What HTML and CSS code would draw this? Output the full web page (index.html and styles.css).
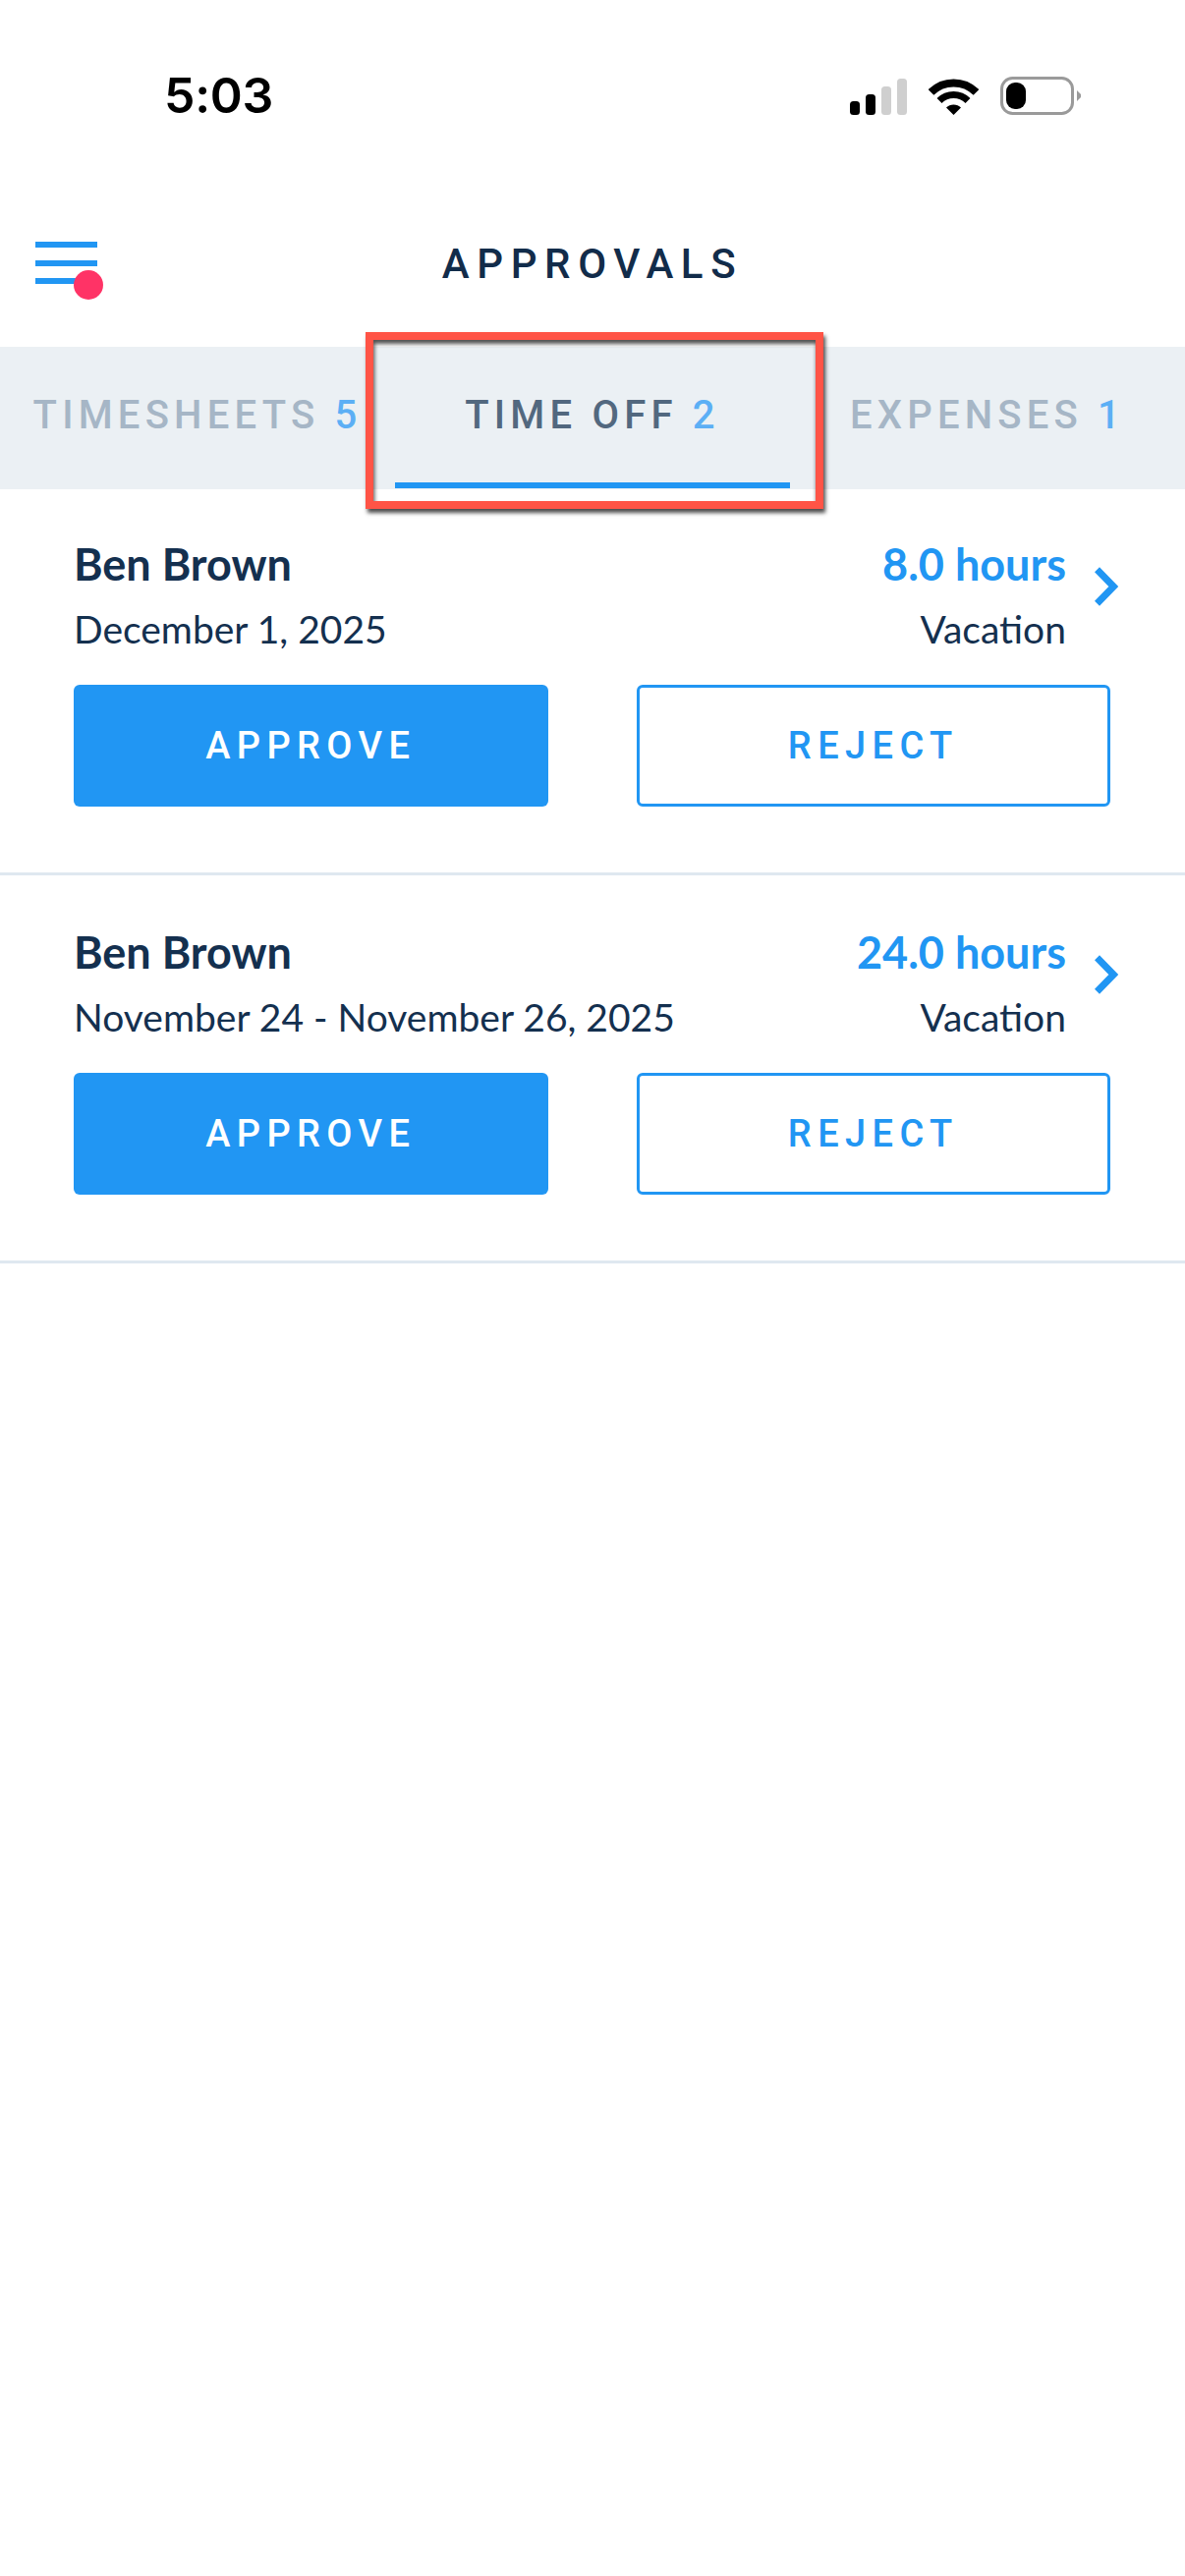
FILE: index.html
```html
<!DOCTYPE html>
<html lang="en">
<head>
    <meta charset="utf-8">
    <title>Approvals</title>
    <link rel="stylesheet" href="styles.css">
</head>
<body>
<div class="status-bar">
    <span class="time">5:03</span>
    <div class="status-icons">
        <svg width="58" height="37" viewBox="0 0 58 37">
            <rect x="0" y="23" width="10" height="14" rx="3.5" fill="#000"></rect>
            <rect x="16" y="16" width="10" height="21" rx="3.5" fill="#000"></rect>
            <rect x="32" y="8" width="10" height="29" rx="3.5" fill="#cfcfcf"></rect>
            <rect x="48" y="0" width="10" height="37" rx="3.5" fill="#cfcfcf"></rect>
        </svg>
        <svg width="51" height="37" viewBox="0 0 51 37">
            <path d="M2.5 14A32.5 32.5 0 0 1 48.5 14" fill="none" stroke="#000" stroke-width="8"></path>
            <path d="M11 22.5A20.5 20.5 0 0 1 40 22.5" fill="none" stroke="#000" stroke-width="7"></path>
            <path d="M25.5 37L18 29.5A10.6 10.6 0 0 1 33 29.5Z" fill="#000"></path>
        </svg>
        <svg width="82" height="39" viewBox="0 0 82 39">
            <rect x="1.5" y="1.5" width="72" height="36" rx="11" fill="none" stroke="#9a9a9a" stroke-width="3"></rect>
            <rect x="6" y="6" width="20" height="27" rx="9" fill="#000"></rect>
            <path d="M78 14L82 18V21L78 25Z" fill="#9a9a9a"></path>
        </svg>
    </div>
</div>

<header class="header">
    <div class="menu-btn">
        <i></i><i></i><i></i>
        <span class="menu-dot"></span>
    </div>
    <h1 class="title">APPROVALS</h1>
</header>

<nav class="tabs">
    <div class="tab">TIMESHEETS <b>5</b></div>
    <div class="tab active">TIME OFF <b>2</b></div>
    <div class="tab">EXPENSES <b>1</b></div>
    <div class="callout"></div>
</nav>

<main class="list">
    <section class="card">
        <div class="card-info">
            <div class="card-left">
                <div class="name">Ben Brown</div>
                <div class="sub">December 1, 2025</div>
            </div>
            <div class="card-right">
                <div class="hours">8.0 hours</div>
                <div class="sub">Vacation</div>
            </div>
            <svg class="chevron" width="24" height="40" viewBox="0 0 24 40">
                <path d="M2.5 2.8L19.3 20L2.5 37.2" fill="none" stroke="#2196f3" stroke-width="7"></path>
            </svg>
        </div>
        <div class="actions">
            <button class="btn btn-primary">APPROVE</button>
            <button class="btn btn-outline">REJECT</button>
        </div>
    </section>

    <section class="card">
        <div class="card-info">
            <div class="card-left">
                <div class="name">Ben Brown</div>
                <div class="sub">November 24 - November 26, 2025</div>
            </div>
            <div class="card-right">
                <div class="hours">24.0 hours</div>
                <div class="sub">Vacation</div>
            </div>
            <svg class="chevron" width="24" height="40" viewBox="0 0 24 40">
                <path d="M2.5 2.8L19.3 20L2.5 37.2" fill="none" stroke="#2196f3" stroke-width="7"></path>
            </svg>
        </div>
        <div class="actions">
            <button class="btn btn-primary">APPROVE</button>
            <button class="btn btn-outline">REJECT</button>
        </div>
    </section>
</main>
</body>
</html>
```

FILE: styles.css
```css
html, body {
    padding: 0;
    margin: 0;
    width: 100%;
    height: 100%;
    background-color: #fff;
    font-family: Lato, "Noto Sans", sans-serif;
    color: #14304f;
}

.status-bar {
    display: flex;
    justify-content: space-between;
    align-items: flex-start;
    box-sizing: border-box;
    height: 150px;
    padding: 78px 106px 0 167px;
}

.time {
    font-family: Inter, sans-serif;
    font-size: 50px;
    font-weight: 600;
    letter-spacing: -.3px;
    line-height: 39px;
    color: #000;
}

.status-icons {
    display: flex;
    align-items: flex-end;
    gap: 22px;
}

.status-icons svg {
    display: block;
}

.header {
    display: flex;
    align-items: center;
    justify-content: center;
    position: relative;
    box-sizing: border-box;
    height: 203px;
    padding-top: 34px;
}

.menu-btn {
    position: absolute;
    left: 36px;
    top: 96px;
    width: 63px;
    display: flex;
    flex-direction: column;
    gap: 12.5px;
}

.menu-btn i {
    display: block;
    height: 6px;
    background-color: #2196f3;
}

.menu-dot {
    position: absolute;
    right: -6px;
    bottom: -16px;
    width: 30px;
    height: 30px;
    border-radius: 50%;
    background-color: #ff3366;
}

.title {
    margin: 0;
    font-family: Roboto, sans-serif;
    font-size: 42px;
    font-weight: 500;
    letter-spacing: 7.6px;
    color: #122c4a;
}

.tabs {
    display: flex;
    position: relative;
    height: 145px;
    background-color: #ebf0f4;
}

.tab {
    flex: 1;
    box-sizing: border-box;
    text-align: center;
    white-space: nowrap;
    padding-top: 47px;
    font-family: Roboto, sans-serif;
    font-size: 40px;
    font-weight: 500;
    line-height: 45px;
    letter-spacing: 5.2px;
    color: #a6b6c6;
}

.tab b {
    font-weight: 500;
    color: #5caff5;
}

.tab.active {
    color: #52687f;
    border-bottom: 6px solid #2196f3;
    height: 144px;
}

.callout {
    position: absolute;
    left: 372px;
    top: -15px;
    width: 466px;
    height: 180px;
    box-sizing: border-box;
    border: 8px solid #ff5446;
    box-shadow: 2px 4px 4px rgba(0, 0, 0, .7), inset 1px 4px 4px rgba(0, 0, 0, .7);
}

.list {
    margin-top: -2px;
}

.card {
    box-sizing: border-box;
    height: 395px;
    padding: 51px 76px 0 75px;
    border-bottom: 3px solid #dfe8f0;
}

.card-info {
    display: flex;
    align-items: flex-start;
}

.card-left {
    flex: 1;
}

.card-right {
    text-align: right;
}

.name, .hours {
    font-size: 45px;
    font-weight: 700;
    line-height: 54px;
}

.hours {
    color: #2196f3;
}

.sub {
    margin-top: 16px;
    font-size: 39px;
    line-height: 47px;
    color: #14304f;
}

.chevron {
    flex: none;
    margin: 30px -8px 0 29px;
}

.actions {
    display: grid;
    grid-template-columns: 1fr 1fr;
    gap: 90px;
    margin-top: 33px;
}

.btn {
    height: 124px;
    box-sizing: border-box;
    border-radius: 6px;
    font-family: Roboto, sans-serif;
    font-size: 38px;
    font-weight: 500;
    letter-spacing: 6.4px;
}

.btn-primary {
    background-color: #2196f3;
    border: none;
    color: #fff;
}

.btn-outline {
    background-color: #fff;
    border: 3px solid #2196f3;
    color: #2196f3;
}
```
